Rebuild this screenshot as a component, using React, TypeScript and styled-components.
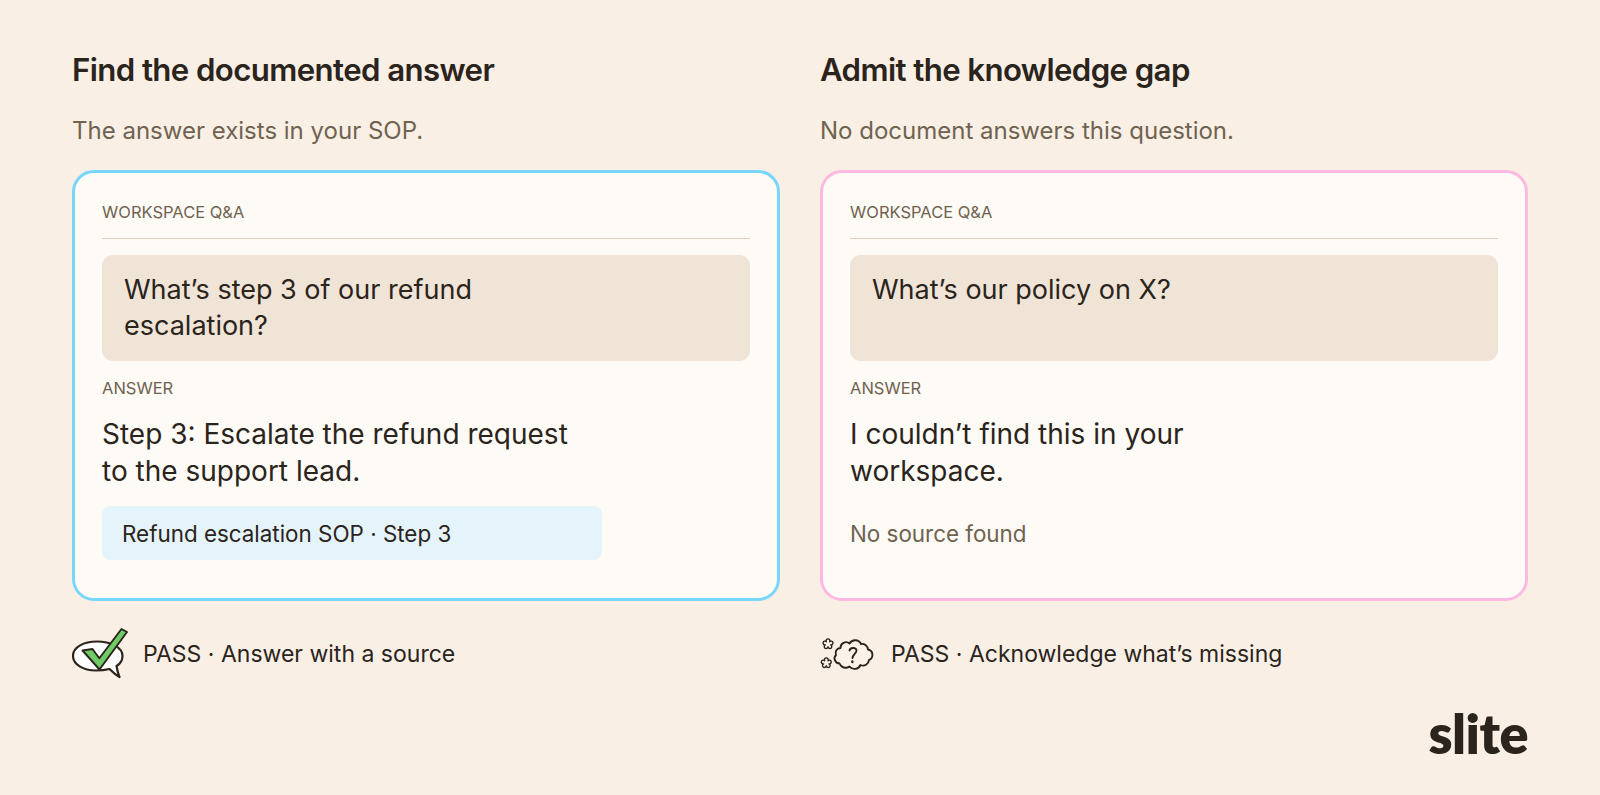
import React from "react";
import styled, { createGlobalStyle } from "styled-components";

const GlobalStyle = createGlobalStyle`
  html, body {
    margin: 0;
    padding: 0;
    background: #f9efe5;
  }
  body {
    font-family: Inter, "Liberation Sans", sans-serif;
    color: #2a241c;
  }
`;

const CheckBubble = () => (
  <svg width="56" height="52" viewBox="0 0 56 52" fill="none">
    <path
      d="M25 13.500C12 13.500 1 19 1 28C1 36.500 11 42.500 24 42.500C29 42.500 33.500 42 37.500 41C40.500 44 44 47 47.500 49C46 45.500 45 41 44.500 38C48 36 50.500 32 50.500 28C50.500 19 38 13.500 25 13.500Z"
      fill="#ffffff"
      stroke="#2a241c"
      strokeWidth="2.2"
      strokeLinejoin="round"
    />
    <path
      d="M10.500 22.500L20.500 21L27.300 30.300L49.500 1L55 4L27.500 41.500Z"
      fill="#6fcb66"
      stroke="#2a241c"
      strokeWidth="1.9"
      strokeLinejoin="round"
    />
  </svg>
);

const puff = "M6.350 6.730A1.900 1.900 0 1 1 9.650 6.730A1.900 1.900 0 1 1 10.660 9.870A1.900 1.900 0 1 1 8 11.800A1.900 1.900 0 1 1 5.340 9.870A1.900 1.900 0 1 1 6.350 6.730Z";

const ThoughtCloud = () => (
  <svg width="60" height="38" viewBox="0 0 60 38" fill="none">
    <g stroke="#2a241c" strokeWidth="1.9" strokeLinejoin="round" strokeLinecap="round">
      <g transform="translate(-2.5 0)">
        <path
          d="M23 13A5.500 5.500 0 0 1 32 8.500A6.500 6.500 0 0 1 43.500 9A6 6 0 0 1 50.500 14.500A5.500 5.500 0 0 1 51.500 25A6 6 0 0 1 43 30A6.500 6.500 0 0 1 32 31.500A6.500 6.500 0 0 1 22 28.500A5 5 0 0 1 18.500 20A5 5 0 0 1 23 13Z"
          fill="#fbf3ea"
        />
        <path d="M32 15.500C32.500 12.500 38 12 39 15C39.500 18 35.500 19 35 23" />
        <path d="M34.800 26.500L34.900 27" strokeWidth="2.4" />
      </g>
      <path d={puff} fill="#fbf3ea" strokeWidth="1.4" />
      <path d={puff} fill="#fbf3ea" strokeWidth="1.4" transform="translate(-1.7 19)" />
    </g>
  </svg>
);

const App: React.FC = () => {
  return (
    <>
      <GlobalStyle />
      <Page>
        <Columns>
          <Column>
            <Title>Find the documented answer</Title>
            <Subtitle>The answer exists in your SOP.</Subtitle>
            <Card accent="#79d6fb">
              <Label>WORKSPACE Q&amp;A</Label>
              <Rule />
              <Question>
                What’s step 3 of our refund
                <br />
                escalation?
              </Question>
              <AnswerLabel>ANSWER</AnswerLabel>
              <Answer>
                Step 3: Escalate the refund request
                <br />
                to the support lead.
              </Answer>
              <Source>Refund escalation SOP · Step 3</Source>
            </Card>
            <Verdict>
              <VerdictIcon>
                <CheckBubble />
              </VerdictIcon>
              <VerdictText>PASS · Answer with a source</VerdictText>
            </Verdict>
          </Column>
          <Column>
            <Title>Admit the knowledge gap</Title>
            <Subtitle>No document answers this question.</Subtitle>
            <Card accent="#fdb9e2">
              <Label>WORKSPACE Q&amp;A</Label>
              <Rule />
              <Question>What’s our policy on X?</Question>
              <AnswerLabel>ANSWER</AnswerLabel>
              <Answer>
                I couldn’t find this in your
                <br />
                workspace.
              </Answer>
              <NoSource>No source found</NoSource>
            </Card>
            <Verdict>
              <VerdictIcon>
                <ThoughtCloud />
              </VerdictIcon>
              <VerdictText>PASS · Acknowledge what’s missing</VerdictText>
            </Verdict>
          </Column>
        </Columns>
        <Footer>
          <Logo>slite</Logo>
        </Footer>
      </Page>
    </>
  );
};
export default App;

const Page = styled.div`
  width: 1600px;
  height: 795px;
  box-sizing: border-box;
  padding: 48px 72px 0 72px;
  background: #f9efe5;
  overflow: hidden;
`;
const Columns = styled.div`
  display: grid;
  grid-template-columns: 708px 708px;
  column-gap: 40px;
`;
const Column = styled.div`
  display: flex;
  flex-direction: column;
`;
const Title = styled.h2`
  margin: 0;
  font-size: 31.2px;
  line-height: 44px;
  font-weight: 600;
  letter-spacing: -0.6px;
  color: #2a241c;
`;
const Subtitle = styled.p`
  margin: 24px 0 0 0;
  font-size: 24px;
  line-height: 30px;
  color: #6f6350;
`;
const Card = styled.div<{ accent: string }>`
  margin-top: 24px;
  height: 431px;
  box-sizing: border-box;
  padding: 28px 27px 0 27px;
  border: 3px solid ${(props) => props.accent};
  border-radius: 22px;
  background: #fefaf5;
  display: flex;
  flex-direction: column;
`;
const Label = styled.div`
  font-size: 16.5px;
  line-height: 22px;
  color: #6f6350;
`;
const Rule = styled.div`
  height: 1px;
  margin-top: 15px;
  background: #e3d0bb;
`;
const Question = styled.div`
  margin-top: 16px;
  height: 106px;
  box-sizing: border-box;
  padding: 17px 22px 0 22px;
  border-radius: 11px;
  background: #f0e4d7;
  font-size: 27px;
  line-height: 36px;
`;
const AnswerLabel = styled(Label)`
  margin-top: 16px;
`;
const Answer = styled.div`
  margin-top: 17px;
  font-size: 28px;
  line-height: 37px;
`;
const Source = styled.div`
  margin-top: 16px;
  width: 500px;
  height: 54px;
  box-sizing: border-box;
  padding: 0 20px;
  display: flex;
  align-items: center;
  border-radius: 8px;
  background: #e5f3fb;
  font-size: 22.4px;
`;
const NoSource = styled(Source)`
  padding: 0;
  background: transparent;
  color: #6f6350;
`;
const Verdict = styled.div`
  margin-top: 27px;
  height: 52px;
  display: flex;
  align-items: center;
`;
const VerdictIcon = styled.div`
  width: 71px;
  flex: none;
  display: flex;
  align-items: center;
`;
const VerdictText = styled.div`
  font-size: 23px;
  line-height: 30px;
`;
const Footer = styled.div`
  display: flex;
  justify-content: flex-end;
  margin-top: 29px;
`;
const Logo = styled.div`
  font-family: Lato, "Open Sans", sans-serif;
  font-size: 54px;
  line-height: 50px;
  font-weight: 800;
  letter-spacing: -0.5px;
  color: #2a241c;
`;
